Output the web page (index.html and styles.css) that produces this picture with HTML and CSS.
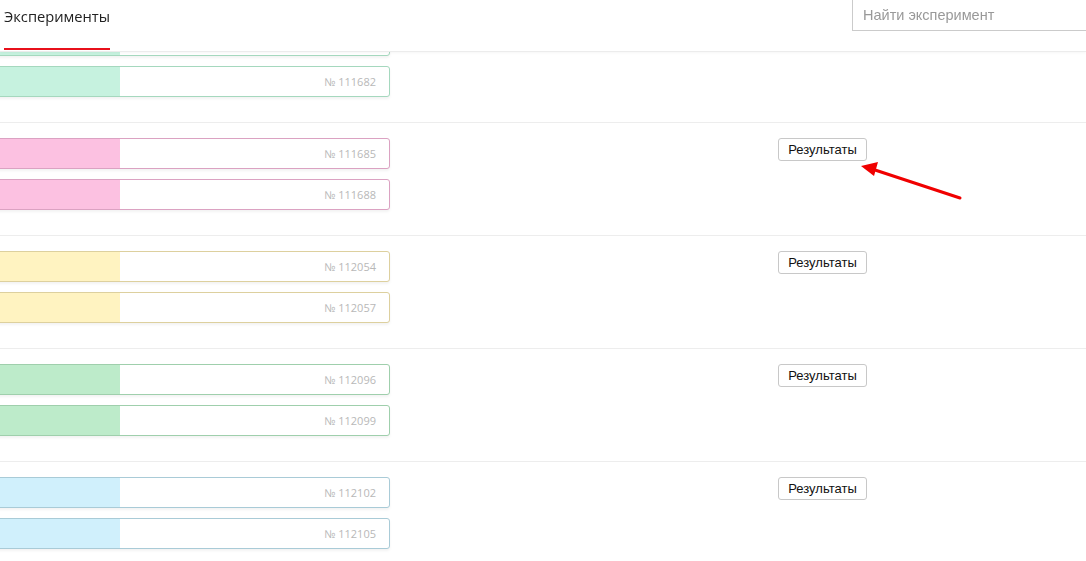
FILE: index.html
```html
<!DOCTYPE html>
<html lang="ru">
<head>
<meta charset="utf-8">
<title>Эксперименты</title>
<link rel="stylesheet" href="styles.css">
</head>
<body>
<header class="topbar">
  <nav class="tabs"><span class="tab active">Эксперименты</span></nav>
  <input class="search" type="text" placeholder="Найти эксперимент">
</header>
<main class="list">
  <section class="group mint">
    <div class="bars">
      <div class="bar"><span class="fill"></span><span class="num">№ 111679</span></div>
      <div class="bar"><span class="fill"></span><span class="num">№ 111682</span></div>
    </div>
    <button class="btn">Результаты</button>
  </section>
  <section class="group pink">
    <div class="bars">
      <div class="bar"><span class="fill"></span><span class="num">№ 111685</span></div>
      <div class="bar"><span class="fill"></span><span class="num">№ 111688</span></div>
    </div>
    <button class="btn">Результаты</button>
  </section>
  <section class="group yellow">
    <div class="bars">
      <div class="bar"><span class="fill"></span><span class="num">№ 112054</span></div>
      <div class="bar"><span class="fill"></span><span class="num">№ 112057</span></div>
    </div>
    <button class="btn">Результаты</button>
  </section>
  <section class="group green">
    <div class="bars">
      <div class="bar"><span class="fill"></span><span class="num">№ 112096</span></div>
      <div class="bar"><span class="fill"></span><span class="num">№ 112099</span></div>
    </div>
    <button class="btn">Результаты</button>
  </section>
  <section class="group blue">
    <div class="bars">
      <div class="bar"><span class="fill"></span><span class="num">№ 112102</span></div>
      <div class="bar"><span class="fill"></span><span class="num">№ 112105</span></div>
    </div>
    <button class="btn">Результаты</button>
  </section>
</main>
<svg class="arrow" width="1086" height="561" viewBox="0 0 1086 561">
  <line x1="960" y1="198" x2="872" y2="169" stroke="#f00000" stroke-width="3" stroke-linecap="round"/>
  <polygon points="861,166 878,162 874,176" fill="#f00000"/>
</svg>
</body>
</html>
```
FILE: styles.css
```css
html, body {
  margin: 0;
  padding: 0;
  background: #fff;
  overflow: hidden;
}
body {
  width: 1086px;
  height: 561px;
  font-family: "Open Sans", "Liberation Sans", sans-serif;
}
.topbar {
  position: fixed;
  top: 0;
  left: 0;
  right: 0;
  height: 51px;
  background: #fff;
  border-bottom: 1px solid #ececec;
  box-shadow: 0 1px 3px rgba(0,0,0,0.04);
  z-index: 5;
  display: flex;
  justify-content: space-between;
  align-items: flex-start;
}
.tabs {
  display: flex;
  padding-left: 4px;
}
.tab {
  display: block;
  font-size: 14.7px;
  color: #222;
  line-height: 20px;
  border-bottom: 2px solid transparent;
}
.tab.active {
  border-bottom-color: #e8101b;
  box-sizing: border-box;
  height: 50px;
  padding-top: 6px;
  width: 106px;
  white-space: nowrap;
}
.search {
  margin: -1px 0 0 0;
  width: 234px;
  height: 32px;
  box-sizing: border-box;
  border: 1px solid #cbcbcb;
  border-right: none;
  padding: 0 10px;
  font-family: "Liberation Sans", Arial, sans-serif;
  font-size: 14.5px;
  color: #333;
  outline: none;
  background: #fff;
}
.search::placeholder {
  color: #999;
}
.list {
  padding-top: 9px;
}
.group {
  border-top: 1px solid #ededed;
  padding: 15px 0 25px 0;
  display: flex;
  align-items: flex-start;
  margin-left: -10px;
}
.bars {
  display: flex;
  flex-direction: column;
  gap: 10px;
  width: 400px;
}
.bar {
  position: relative;
  height: 31px;
  box-sizing: border-box;
  border: 1px solid #ccc;
  border-radius: 3px;
  background: #fff;
  box-shadow: 0 2px 3px rgba(0,0,0,0.05);
  display: flex;
  align-items: center;
  justify-content: space-between;
  overflow: hidden;
}
.fill {
  align-self: stretch;
  width: 129px;
}
.num {
  font-size: 11px;
  color: #b8b8b8;
  padding-right: 13px;
}
.mint .bar { border-color: #a5d8be; }
.mint .fill { background: #c6f2df; }
.pink .bar { border-color: #dba2c2; }
.pink .fill { background: #fcc1e1; }
.yellow .bar { border-color: #ddd09e; }
.yellow .fill { background: #fff3c1; }
.green .bar { border-color: #9fcfac; }
.green .fill { background: #bdebca; }
.blue .bar { border-color: #a9cbd7; }
.blue .fill { background: #d0f0fc; }
.btn {
  margin-left: 388px;
  height: 23px;
  width: 89px;
  padding: 0;
  background: #fff;
  border: 1px solid #c8c8c8;
  border-radius: 3px;
  font-family: "Liberation Sans", Arial, sans-serif;
  font-size: 13px;
  color: #111;
  line-height: 21px;
}
.arrow {
  position: fixed;
  top: 0;
  left: 0;
  z-index: 10;
  pointer-events: none;
}
```
